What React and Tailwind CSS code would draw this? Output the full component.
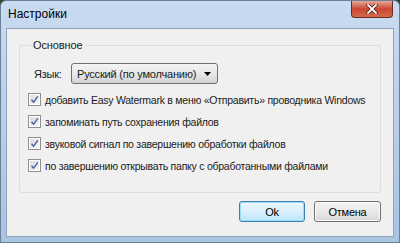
import React from "react";

function Check() {
  return (
    <div className="w-[13px] h-[13px] shrink-0 border border-[#8f8f8f] bg-white p-[1px]">
      <div className="w-full h-full bg-gradient-to-br from-[#d9dce2] to-[#f6f6f6] flex items-center justify-center">
        <svg width="9" height="9" viewBox="0 0 9 9">
          <path d="M1.5 4.8 L3.6 7.2 L7.8 1.3" fill="none" stroke="#4a5f9a" strokeWidth="1.4" />
        </svg>
      </div>
    </div>
  );
}

function Row({ children }) {
  return (
    <div className="flex items-center gap-[4px] h-[13px]">
      <Check />
      <span className="whitespace-nowrap">{children}</span>
    </div>
  );
}

export default function App() {
  return (
    <div
      className="w-[400px] h-[243px] bg-[#2f4a2a] overflow-hidden"
      style={{ fontFamily: '"Liberation Sans", Arial, sans-serif' }}
    >
      <div className="w-full h-full rounded-t-[6px] border border-[#6b7f95] bg-gradient-to-b from-[#c9dbf0] via-[#b9cfea] to-[#a9c3e3] flex flex-col">
        {/* title bar */}
        <div className="h-[27px] flex items-start shrink-0">
          <div className="pl-[7px] pt-[6px] text-[12px] text-black leading-[14px]">Настройки</div>
          <div className="ml-auto mr-[6px] w-[42px] h-[17px] rounded-b-[4px] border border-t-0 border-[#6a2a22] bg-gradient-to-b from-[#e5a799] via-[#c9452f] to-[#d66b4d] flex items-center justify-center">
            <svg width="12" height="10" viewBox="0 0 12 10">
              <path d="M2 1 L10 9 M10 1 L2 9" stroke="#3a1a14" strokeWidth="3.2" strokeLinecap="square" />
              <path d="M2 1 L10 9 M10 1 L2 9" stroke="#ffffff" strokeWidth="1.8" strokeLinecap="square" />
            </svg>
          </div>
        </div>
        {/* client */}
        <div className="mx-[5px] mb-[5px] flex-1 border border-[#8ea4bd] bg-[#f0f0f0] flex flex-col text-[10.5px] tracking-[-0.25px] text-[#1a1a1a] leading-[14px]">
          <fieldset className="mt-[9px] mx-[12px] h-[155px] border border-[#d5dfe5] rounded-[3px] px-[8px] pb-0">
            <legend className="ml-[3px] px-[2px] text-[11px] tracking-[-0.1px] leading-[14px]">Основное</legend>
            <div className="flex items-center mt-[11px] h-[21px]">
              <span className="ml-[6px] w-[37px] shrink-0 text-[11px]">Язык:</span>
              <div className="w-[147px] shrink-0 h-[21px] rounded-[3px] border border-[#707070] bg-gradient-to-b from-[#f4f4f4] via-[#e8e8e8] to-[#d4d4d4] flex items-center pl-[5px] pr-[6px]">
                <span className="whitespace-nowrap text-[11px] tracking-[-0.2px]">Русский (по умолчанию)</span>
                <svg className="ml-auto shrink-0" width="7" height="4" viewBox="0 0 7 4">
                  <path d="M0 0 H7 L3.5 4 Z" fill="#000" />
                </svg>
              </div>
            </div>
            <div className="mt-[9px] flex flex-col gap-[9px]">
              <Row>добавить Easy Watermark в меню «Отправить» проводника Windows</Row>
              <Row>запоминать путь сохранения файлов</Row>
              <Row>звуковой сигнал по завершению обработки файлов</Row>
              <Row>по завершению открывать папку с обработанными файлами</Row>
            </div>
          </fieldset>
          <div className="flex justify-end gap-[9px] mr-[12px] mt-[8px]">
            <button className="w-[66px] h-[21px] rounded-[3px] border border-[#3c7fb1] bg-gradient-to-b from-[#eaf6fd] via-[#d9f0fc] to-[#bee6fd] shadow-[inset_0_0_0_1px_#9edcf7] text-[11px] leading-[14px] text-black">
              Ok
            </button>
            <button className="w-[67px] h-[21px] rounded-[3px] border border-[#707070] bg-gradient-to-b from-[#f2f2f2] via-[#ebebeb] to-[#d6d6d6] shadow-[inset_0_0_0_1px_#fcfcfc] text-[11px] leading-[14px] text-black">
              Отмена
            </button>
          </div>
        </div>
      </div>
    </div>
  );
}
